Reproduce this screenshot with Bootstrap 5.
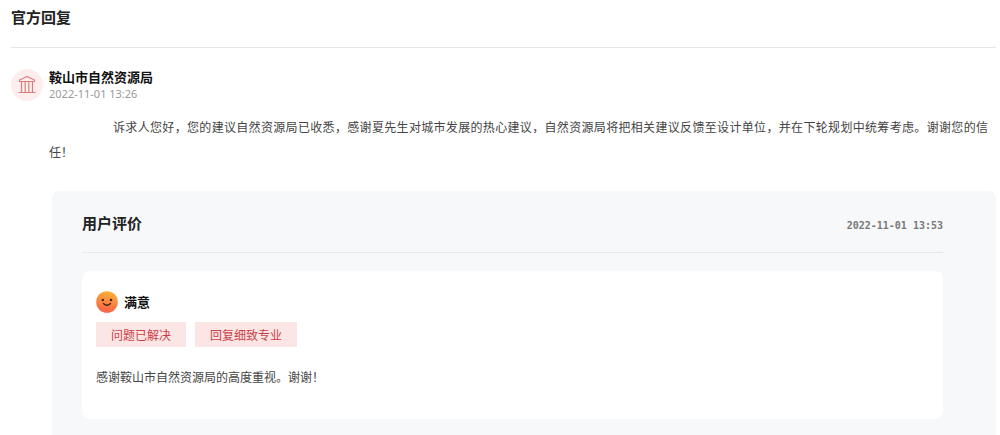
<!DOCTYPE html>
<html lang="zh-CN">
<head>
<meta charset="utf-8">
<meta name="viewport" content="width=device-width, initial-scale=1">
<title>官方回复</title>
<link href="https://cdn.jsdelivr.net/npm/bootstrap@5.3.0/dist/css/bootstrap.min.css" rel="stylesheet">
<style>
  body { font-family: "Noto Sans", "Noto Sans CJK SC", sans-serif; font-size: 12px; line-height: 24px; color: #444; background: #fff; }
  .reply-page { padding: 5px 4px 0 11px; }
  .section-title { font-family: "Noto Sans CJK SC", sans-serif; font-size: 15px; line-height: 24px; font-weight: 700; color: #222; }
  .page-head { padding-bottom: 18px; border-bottom: 1px solid #e6e6e6; }
  .reply-head { gap: 6px; padding-top: 20px; }
  .agency-icon { width: 32px; height: 32px; flex: none; }
  .name-text { font-family: "Noto Sans CJK SC", sans-serif; font-size: 13px; line-height: 18px; font-weight: 700; color: #111; }
  .reply-time { font-size: 11px; line-height: 16px; color: #999; }
  .reply-text { margin-left: 38px; padding: 12px 8px 0 0; line-height: 25px; text-indent: 64px; text-align: justify; font-family: "Noto Sans CJK SC", sans-serif; }
  .review-panel { margin: 27px 0 0 41px; padding: 20px 53px 16px 30px; background: #f7f8fa; border-radius: 8px 8px 0 0; }
  .review-head { padding-bottom: 14px; border-bottom: 1px solid #e6e8ea; }
  .review-time { font-family: "DejaVu Sans Mono", monospace; font-size: 10px; line-height: 24px; color: #777; padding-top: 3px; }
  .review-card { margin-top: 18px; padding: 20px 14px 30px; background: #fff; border-radius: 8px; }
  .face-icon { width: 22px; height: 22px; flex: none; }
  .face-row { gap: 6px; }
  .review-tag { padding: 0 15px; line-height: 25px; color: #cc3f48; background: #fbe6e5; font-family: "Noto Sans CJK SC", sans-serif; }
  .tag-list { gap: 9px; margin-top: 9px; }
  .review-text { margin-top: 18px; font-family: "Noto Sans CJK SC", sans-serif; }
</style>
</head>
<body>
<main class="reply-page">
  <header class="page-head"><h1 class="section-title mb-0">官方回复</h1></header>
  <article>
    <div class="reply-head d-flex align-items-center">
      <svg class="agency-icon" viewBox="0 0 32 32" aria-hidden="true">
        <circle cx="16" cy="16" r="16" fill="#fdeeed"/>
        <g fill="none" stroke="#d97f80" stroke-width="1.2" stroke-linejoin="round">
          <path d="M8.5 12.5V11L16 7.5l7.500 3.500v1.500zM7.500 23.500h17"/>
          <path d="M10.500 12.500v11M14.200 12.500v11M17.800 12.500v11M21.500 12.500v11"/>
        </g>
      </svg>
      <div>
        <h2 class="name-text mb-0">鞍山市自然资源局</h2>
        <time class="reply-time d-block" datetime="2022-11-01T13:26">2022-11-01 13:26</time>
      </div>
    </div>
    <p class="reply-text mb-0">诉求人您好，您的建议自然资源局已收悉，感谢夏先生对城市发展的热心建议，自然资源局将把相关建议反馈至设计单位，并在下轮规划中统筹考虑。谢谢您的信任！</p>
  </article>
  <section class="review-panel">
    <div class="review-head d-flex justify-content-between align-items-start">
      <h2 class="section-title mb-0">用户评价</h2>
      <time class="review-time fw-bold" datetime="2022-11-01T13:53">2022-11-01 13:53</time>
    </div>
    <div class="review-card">
      <div class="face-row d-flex align-items-center">
        <svg class="face-icon" viewBox="0 0 22 22" aria-hidden="true">
          <defs><linearGradient id="face" x1="0.6" y1="0" x2="0.4" y2="1"><stop offset="0" stop-color="#fbb034"/><stop offset="1" stop-color="#f9604a"/></linearGradient></defs>
          <circle cx="11" cy="11" r="10.800" fill="url(#face)"/>
          <circle cx="6.800" cy="9" r="1.300" fill="#4a2018"/>
          <circle cx="15" cy="9" r="1.300" fill="#4a2018"/>
          <path d="M7.500 12.500q3.500 3.600 7 0" fill="none" stroke="#4a2018" stroke-width="1.400" stroke-linecap="round"/>
        </svg>
        <h3 class="name-text mb-0">满意</h3>
      </div>
      <div class="tag-list d-flex flex-wrap">
        <span class="review-tag">问题已解决</span>
        <span class="review-tag">回复细致专业</span>
      </div>
      <p class="review-text mb-0">感谢鞍山市自然资源局的高度重视。谢谢！</p>
    </div>
  </section>
</main>
<script src="https://cdn.jsdelivr.net/npm/bootstrap@5.3.0/dist/js/bootstrap.bundle.min.js"></script>
</body>
</html>
